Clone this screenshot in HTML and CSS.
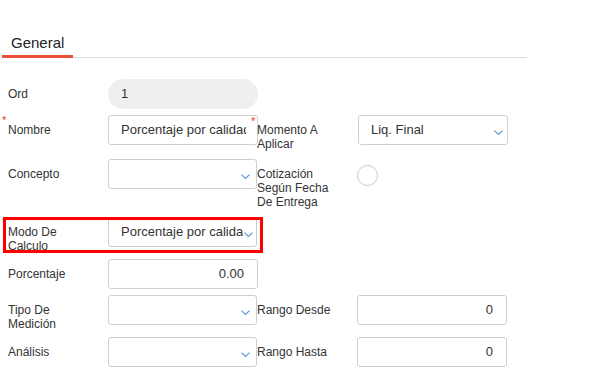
FILE: index.html
```html
<!DOCTYPE html>
<html lang="es">
<head>
<meta charset="utf-8">
<title>General</title>
<link rel="stylesheet" href="styles.css">
</head>
<body>
<div class="page">
  <div class="tabs">
    <div class="tab active">General</div>
  </div>
  <div class="form">
    <div class="field">
      <div class="label">Ord</div>
      <div class="control pill"><span class="value">1</span></div>
    </div>
    <div class="field right"></div>

    <div class="field">
      <div class="label required">Nombre</div>
      <div class="control"><span class="value">Porcentaje por calidad</span></div>
    </div>
    <div class="field right">
      <div class="label required">Momento A Aplicar</div>
      <div class="control select filled"><span class="value">Liq. Final</span>
        <svg class="chev" width="9" height="5" viewBox="0 0 9 5"><path d="M0.5 0.6 L4.5 4.4 L8.5 0.6"/></svg>
      </div>
    </div>

    <div class="field">
      <div class="label">Concepto</div>
      <div class="control select"><span class="value"></span>
        <svg class="chev" width="9" height="5" viewBox="0 0 9 5"><path d="M0.5 0.6 L4.5 4.4 L8.5 0.6"/></svg>
      </div>
    </div>
    <div class="field right">
      <div class="label">Cotización Según Fecha De Entrega</div>
      <div class="radio"></div>
    </div>

    <div class="field highlighted">
      <div class="label required">Modo De Calculo</div>
      <div class="control select filled tight"><span class="value">Porcentaje por calidad</span>
        <svg class="chev" width="9" height="5" viewBox="0 0 9 5"><path d="M0.5 0.6 L4.5 4.4 L8.5 0.6"/></svg>
      </div>
    </div>
    <div class="field right"></div>

    <div class="field">
      <div class="label">Porcentaje</div>
      <div class="control number"><span class="value">0.00</span></div>
    </div>
    <div class="field right"></div>

    <div class="field">
      <div class="label">Tipo De Medición</div>
      <div class="control select"><span class="value"></span>
        <svg class="chev" width="9" height="5" viewBox="0 0 9 5"><path d="M0.5 0.6 L4.5 4.4 L8.5 0.6"/></svg>
      </div>
    </div>
    <div class="field right">
      <div class="label">Rango Desde</div>
      <div class="control number"><span class="value">0</span></div>
    </div>

    <div class="field">
      <div class="label">Análisis</div>
      <div class="control select"><span class="value"></span>
        <svg class="chev" width="9" height="5" viewBox="0 0 9 5"><path d="M0.5 0.6 L4.5 4.4 L8.5 0.6"/></svg>
      </div>
    </div>
    <div class="field right">
      <div class="label">Rango Hasta</div>
      <div class="control number"><span class="value">0</span></div>
    </div>
  </div>
</div>
</body>
</html>
```

FILE: styles.css
```css
html, body {
  margin: 0;
  padding: 0;
  background: #ffffff;
}

body {
  font-family: "Liberation Sans", Arial, sans-serif;
  color: #333333;
}

.page {
  width: 606px;
  height: 377px;
  overflow: hidden;
}

.tabs {
  display: flex;
  margin: 26px 0 0 2px;
  width: 525px;
  border-bottom: 1px solid #dcdcdc;
}

.tab {
  font-size: 15px;
  line-height: 17px;
  padding: 8px 9px 4px 9px;
  color: #222222;
  border-bottom: 3px solid transparent;
  margin-bottom: -1px;
}

.tab.active {
  border-bottom-color: #e8503a;
}

.form {
  display: grid;
  grid-template-columns: 249px 249px;
  row-gap: 6px;
  margin: 21px 0 0 8px;
  align-items: start;
}

.field {
  position: relative;
  display: flex;
  align-items: flex-start;
}

.label {
  position: relative;
  flex: 0 0 100px;
  box-sizing: border-box;
  width: 100px;
  padding: 8px 16px 0 0;
  font-size: 12px;
  line-height: 14px;
  color: #333333;
}

.field.right .label {
  padding-bottom: 2px;
}

.label.required::before {
  content: "*";
  position: absolute;
  left: -6px;
  top: -2px;
  font-size: 11px;
  color: #e53935;
}

.field.right .label.required::before {
  left: -6px;
  top: -1px;
}

.control {
  position: relative;
  flex: 0 0 150px;
  box-sizing: border-box;
  width: 150px;
  height: 30px;
  border: 1px solid #cfcfcf;
  border-radius: 3px;
  padding: 0 11px 0 12px;
  font-size: 13px;
  line-height: 28px;
  color: #333333;
  background: #ffffff;
}

.control.select {
  width: 149px;
  flex-basis: 149px;
}

.field.right .control.select {
  width: 150px;
  flex-basis: 150px;
  margin-left: 1px;
}

.value {
  display: block;
  overflow: hidden;
  white-space: nowrap;
  height: 28px;
}

.control.pill {
  border: none;
  border-radius: 15px;
  background: #eeeff1;
  padding-left: 13px;
  line-height: 30px;
}

.control.pill .value {
  height: 30px;
}

.control.number {
  text-align: right;
  padding: 0 13px 0 12px;
}

.control.tight {
  padding-right: 13px;
}

.chev {
  position: absolute;
  right: 6px;
  top: 14px;
  fill: none;
  stroke: #5f9ad6;
  stroke-width: 1.3;
}

.control.filled .chev {
  right: 4px;
}

.control.tight .chev {
  right: 3px;
}

.radio {
  box-sizing: border-box;
  width: 21px;
  height: 21px;
  margin-top: 6px;
  border: 1px solid #c9c9c9;
  border-radius: 50%;
  background: #ffffff;
}

.field.highlighted::after {
  content: "";
  position: absolute;
  left: -5px;
  top: 0;
  width: 260px;
  height: 36px;
  box-sizing: border-box;
  border: 3px solid #ff0000;
  pointer-events: none;
}
```
